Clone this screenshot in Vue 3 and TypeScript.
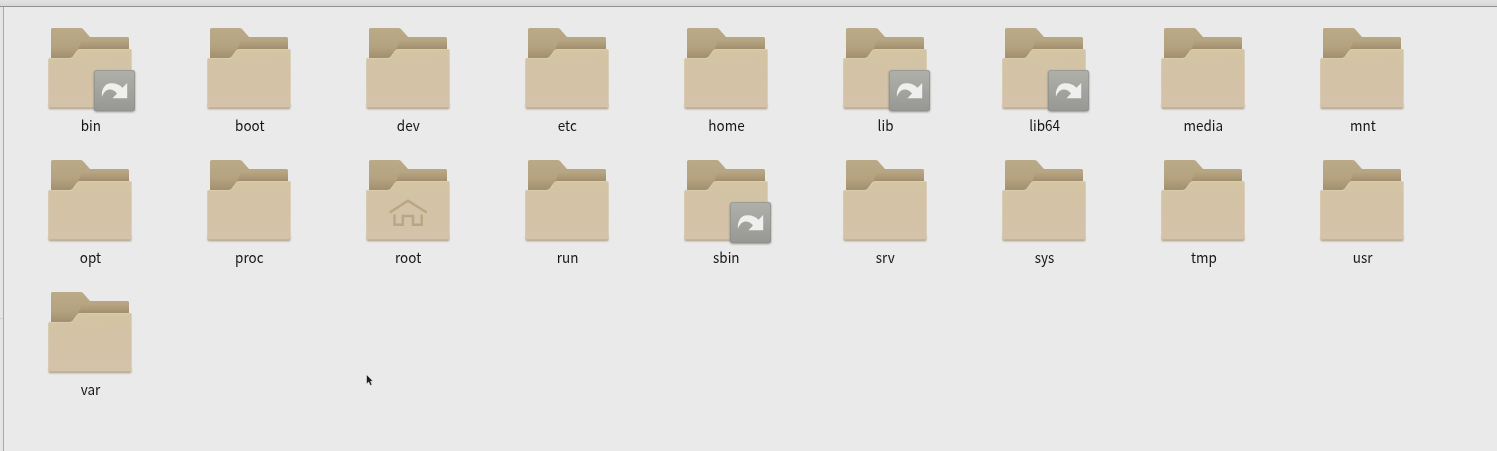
<script setup lang="ts">
interface Folder {
  name: string
  link?: boolean
  home?: boolean
}

const folders: Folder[] = [
  { name: 'bin', link: true },
  { name: 'boot' },
  { name: 'dev' },
  { name: 'etc' },
  { name: 'home' },
  { name: 'lib', link: true },
  { name: 'lib64', link: true },
  { name: 'media' },
  { name: 'mnt' },
  { name: 'opt' },
  { name: 'proc' },
  { name: 'root', home: true },
  { name: 'run' },
  { name: 'sbin', link: true },
  { name: 'srv' },
  { name: 'sys' },
  { name: 'tmp' },
  { name: 'usr' },
  { name: 'var' },
]
</script>

<template>
  <div class="window">
    <svg class="defs" width="0" height="0" aria-hidden="true">
      <defs>
        <linearGradient id="back" gradientUnits="userSpaceOnUse" x1="0" y1="8" x2="0" y2="38">
          <stop offset="0" stop-color="#baaa88" />
          <stop offset="0.6" stop-color="#b5a380" />
          <stop offset="1" stop-color="#a18f6e" />
        </linearGradient>
        <linearGradient id="shade" gradientUnits="userSpaceOnUse" x1="0" y1="20" x2="0" y2="29">
          <stop offset="0" stop-color="#a18f6e" stop-opacity="0" />
          <stop offset="1" stop-color="#9c8a6a" stop-opacity=".8" />
        </linearGradient>
        <linearGradient id="front" x1="0" y1="0" x2="0.05" y2="1">
          <stop offset="0" stop-color="#d4c5a4" />
          <stop offset="0.5" stop-color="#d3c2a6" />
          <stop offset="1" stop-color="#d4c3aa" />
        </linearGradient>
        <linearGradient id="emblem" x1="0" y1="0" x2="0" y2="1">
          <stop offset="0" stop-color="#b0b0ab" />
          <stop offset="1" stop-color="#979793" />
        </linearGradient>
        <filter id="soft" x="-10%" y="-50%" width="120%" height="200%">
          <feGaussianBlur stdDeviation="1" />
        </filter>
      </defs>
    </svg>
    <div class="toolbar-edge"></div>
    <div class="body">
      <div class="sidebar-edge"><div class="separator"></div></div>
      <main class="grid">
        <div v-for="folder in folders" :key="folder.name" class="item">
          <svg class="icon" width="96" height="96" viewBox="0 0 96 96">
            <path d="M7 84h82v5H7z" fill="#77705f" opacity=".65" filter="url(#soft)" />
            <path d="M9 45V9.500Q9 8 10.500 8H38.500Q40 8 41 9L48 17H85.500Q87 17 87 18.500V45Z" fill="url(#back)" />
            <path d="M40 20H87V30H36Z" fill="url(#shade)" />
            <path
              d="M6.200 39.500Q6.200 38 7.700 38H27.500Q30 38 31 36L35 30.500Q36 29 38 29H88.200Q89.700 29 89.700 30.500V87Q89.700 88.500 88.200 88.500H7.700Q6.200 88.500 6.200 87Z"
              fill="url(#front)"
            />
            <path d="M7.500 38.500H28Q30.500 38.500 31.500 36.500L35.500 31Q36.500 29.500 38.500 29.500H88.500" stroke="#d9ccaf" fill="none" />
            <path d="M7.500 88H88.500" stroke="#b3a68d" fill="none" />
            <g v-if="folder.home" fill="none" stroke="#b9a684" stroke-width="2.400">
              <path d="M29.700 60.500L48 48.700L66.700 60.500" />
              <path d="M34.500 62.500V72.700H42.800V64H53V72.700H61.700V62.500" />
            </g>
            <g v-if="folder.link">
              <rect x="52" y="51" width="41" height="41" rx="3" fill="#66645e" opacity=".7" filter="url(#soft)" />
              <rect x="52" y="50" width="41" height="41" rx="2.500" fill="url(#emblem)" />
              <rect x="52.500" y="50.500" width="40" height="40" rx="2.500" fill="none" stroke="#8c8c88" opacity=".6" />
              <path
                d="M60 77C59 69 63 63.300 69 63.200C74 63 77.500 64.500 80.500 67.800L85.200 63V78.200H70.500L75 73.500C70.500 67.200 62.500 68 60 77Z"
                fill="#efefed"
              />
            </g>
          </svg>
          <span class="label">{{ folder.name }}</span>
        </div>
      </main>
    </div>
    <svg class="pointer" width="8" height="13" viewBox="0 0 8 13">
      <path d="M.5.5V10L2.700 8L4.300 11.500L6 10.700L4.500 7.300H7Z" fill="#1c1c1c" stroke="#f8f8f8" stroke-width=".5" />
    </svg>
  </div>
</template>

<style>
html,
body {
  margin: 0;
  overflow: hidden;
}
</style>

<style scoped>
.window {
  position: relative;
  display: flex;
  flex-direction: column;
  width: 1497px;
  height: 451px;
  overflow: hidden;
  background: #eaeaea;
}
.defs {
  position: absolute;
}
.toolbar-edge {
  flex: none;
  height: 6px;
  background: linear-gradient(#e2e2e2, #d8d8d8);
  border-bottom: 1px solid #919191;
}
.body {
  display: flex;
  flex: 1;
}
.sidebar-edge {
  width: 3px;
  background: #e5e5e5;
  border-right: 1px solid #a9a9a9;
}
.separator {
  height: 1px;
  margin-top: 311px;
  background: #d0d0d0;
}
.grid {
  display: grid;
  grid-template-columns: repeat(9, 159px);
  grid-auto-rows: 132px;
  align-content: start;
  padding: 13px 0 0 6px;
}
.item {
  display: flex;
  flex-direction: column;
  align-items: center;
}
.icon {
  display: block;
}
.label {
  height: 20px;
  margin: -1px 0 0 2px;
  font: 14.500px/20px "Noto Sans CJK SC", "Noto Sans", sans-serif;
  color: #161616;
  transform: scaleX(0.93);
}
.pointer {
  position: absolute;
  left: 366px;
  top: 374px;
}
</style>
